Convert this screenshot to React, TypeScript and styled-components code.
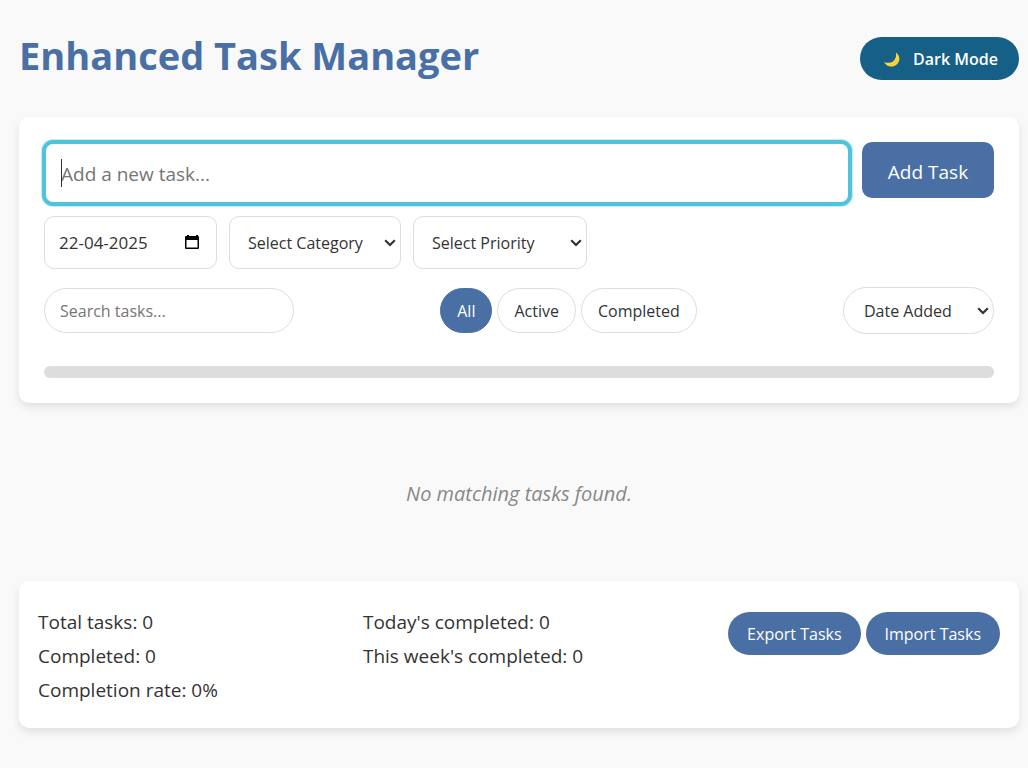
import React, { useState } from "react";
import styled, { createGlobalStyle, css } from "styled-components";

const GlobalStyle = createGlobalStyle`
  *, *::before, *::after { box-sizing: border-box; }
  body {
    margin: 0;
    background: #f9f9f9;
    color: #333333;
    font-family: "Open Sans", "Noto Sans", sans-serif;
    font-size: 16px;
  }
  button, input, select { font-family: inherit; margin: 0; }
`;

const Page = styled.main`
  max-width: 1028px;
  margin: 0 auto;
  padding: 20px 9px 32px 19px;
`;

const Header = styled.header`
  display: flex;
  align-items: center;
  justify-content: space-between;
  height: 77px;
  margin-bottom: 20px;
`;

const Title = styled.h1`
  margin: 0 0 8px;
  color: #4a6fa5;
  font-size: 38px;
  font-weight: 700;
  line-height: 56px;
`;

const PillButton = styled.button<{ $dark?: boolean }>`
  display: inline-flex;
  align-items: center;
  justify-content: center;
  gap: 12px;
  height: 43px;
  padding: 0 ${(p) => (p.$dark ? 21 : 19)}px;
  border: none;
  border-radius: 22px;
  background: ${(p) => (p.$dark ? "#166088" : "#4a6fa5")};
  color: #ffffff;
  font-size: 16px;
  font-weight: ${(p) => (p.$dark ? 600 : 400)};
  white-space: nowrap;
  cursor: pointer;
`;

const Card = styled.section`
  border-radius: 10px;
  background: #ffffff;
  box-shadow: 0 4px 8px rgba(0, 0, 0, 0.1);
`;

const Controls = styled(Card)`
  padding: 25px;
`;

const TaskForm = styled.form`
  display: flex;
  flex-wrap: wrap;
  align-items: flex-start;
  gap: 12px;
`;

const FormRow = styled.div`
  display: flex;
  align-items: flex-start;
  flex: 1 0 100%;
  gap: 12px;
`;

const TaskField = styled.div`
  position: relative;
  display: flex;
  flex: 1;
  min-width: 0;
`;

const TaskInput = styled.input`
  flex: 1;
  min-width: 0;
  height: 62px;
  padding: 2px 15px 0;
  border: 2px solid #4fc3dc;
  border-radius: 9px;
  outline: none;
  box-shadow: 0 0 0 2px #4fc3dc, 0 0 0 3px #c4eaf3;
  color: #333333;
  caret-color: transparent;
  font-size: 19px;
  &::placeholder { color: #757575; }
`;

const Caret = styled.span`
  position: absolute;
  top: 17px;
  left: 17px;
  width: 1px;
  height: 28px;
  background: #333333;
  pointer-events: none;
`;

const AddButton = styled.button`
  width: 132px;
  height: 56px;
  padding: 4px 0 0;
  border: none;
  border-radius: 10px;
  background: #4a6fa5;
  color: #ffffff;
  font-size: 19px;
  font-weight: 500;
  cursor: pointer;
`;

const fieldFrame = css`
  border: 1px solid #dddddd;
  background-color: #ffffff;
  color: #333333;
  font-size: 16px;
`;

const DateField = styled.div`
  ${fieldFrame}
  display: flex;
  align-items: center;
  width: 173px;
  height: 53px;
  padding: 0 14px;
  border-radius: 10px;
`;

const DateInput = styled.input`
  flex: 1;
  min-width: 0;
  padding: 0;
  border: none;
  outline: none;
  background: transparent;
  color: inherit;
  font-size: 17px;
`;

const IconButton = styled.button`
  display: flex;
  padding: 0;
  border: none;
  background: transparent;
  cursor: pointer;
`;

const SelectField = styled.div<{ $width: number }>`
  position: relative;
  display: flex;
  width: ${(p) => p.$width}px;
`;

const Select = styled.select<{ $pill?: boolean }>`
  ${fieldFrame}
  appearance: none;
  flex: 1;
  min-width: 0;
  height: ${(p) => (p.$pill ? 47 : 53)}px;
  padding: 0 20px 0 ${(p) => (p.$pill ? 20 : 18)}px;
  border-radius: ${(p) => (p.$pill ? 24 : 10)}px;
`;

const Chevron = styled.svg`
  position: absolute;
  top: calc(50% - 4px);
  right: 5px;
  width: 12px;
  height: 8px;
  pointer-events: none;
`;

const Toolbar = styled.div`
  display: flex;
  align-items: center;
  justify-content: space-between;
  gap: 12px;
  margin-top: 18px;
`;

const SearchInput = styled.input`
  ${fieldFrame}
  width: 250px;
  height: 45px;
  padding: 0 15px;
  border-radius: 23px;
  &::placeholder { color: #757575; }
`;

const Filters = styled.div`
  display: flex;
  gap: 5px;
`;

const FilterButton = styled.button<{ $active: boolean }>`
  ${fieldFrame}
  height: 45px;
  padding: 0 16px;
  border-radius: 23px;
  cursor: pointer;
  ${(p) =>
    p.$active &&
    css`
      border-color: #4a6fa5;
      background-color: #4a6fa5;
      color: #ffffff;
    `}
`;

const ProgressTrack = styled.div`
  height: 12px;
  margin-top: 32px;
  border-radius: 6px;
  background: #dddddd;
`;

const EmptyMessage = styled.p`
  margin: 76px 0 72px;
  color: #888888;
  font-size: 20px;
  font-style: italic;
  line-height: 30px;
  text-align: center;
`;

const Stats = styled(Card)`
  display: flex;
  align-items: flex-start;
  justify-content: space-between;
  padding: 24px 19px 21px;
`;

const StatList = styled.div`
  font-size: 19px;
  line-height: 34px;
`;

const Actions = styled.div`
  display: flex;
  gap: 5px;
  margin-top: 7px;
`;

const FILTERS = ["All", "Active", "Completed"];

interface DropdownProps {
  label: string;
  width: number;
  options: string[];
  pill?: boolean;
}

function Dropdown({ label, width, options, pill }: DropdownProps) {
  return (
    <SelectField $width={width}>
      <Select $pill={pill} aria-label={label}>
        {options.map((option) => (
          <option key={option}>{option}</option>
        ))}
      </Select>
      <Chevron viewBox="0 0 12 8" aria-hidden="true">
        <path d="M1.2 1.3L6 6L10.8 1.3" fill="none" stroke="#333333" strokeWidth="2.2" />
      </Chevron>
    </SelectField>
  );
}

export default function App() {
  const [task, setTask] = useState("");
  const [focused, setFocused] = useState(true);
  const [date, setDate] = useState("22-04-2025");
  const [query, setQuery] = useState("");
  const [filter, setFilter] = useState("All");

  return (
    <>
      <GlobalStyle />
      <Page>
        <Header>
          <Title>Enhanced Task Manager</Title>
          <PillButton type="button" $dark>
            <svg width="20" height="20" viewBox="0 0 20 20" aria-hidden="true">
              <path
                d="M15 3.5C19 6.5 19.4 11.5 16.5 14.8C13 18.8 6 18.8 3 13C7 14.6 11 14 13.2 11.2C15 9 15.4 6.5 15 3.5Z"
                fill="#fdd835"
              />
              <path d="M16.8 9.5C16.5 13.5 12 16.8 7.5 16.2C11.5 15.8 15.5 13.5 16.8 9.5Z" fill="#fbb430" />
            </svg>
            Dark Mode
          </PillButton>
        </Header>

        <Controls>
          <TaskForm onSubmit={(e) => e.preventDefault()}>
            <FormRow>
              <TaskField>
                <TaskInput
                  autoFocus
                  aria-label="New task"
                  placeholder="Add a new task..."
                  value={task}
                  onFocus={() => setFocused(true)}
                  onBlur={() => setFocused(false)}
                  onChange={(e) => setTask(e.target.value)}
                  style={{ caretColor: task ? "#333333" : undefined }}
                />
                {focused && !task && <Caret />}
              </TaskField>
              <AddButton type="submit">Add Task</AddButton>
            </FormRow>
            <DateField>
              <DateInput aria-label="Due date" value={date} onChange={(e) => setDate(e.target.value)} />
              <IconButton type="button" aria-label="Open calendar">
                <svg width="18" height="18" viewBox="0 0 18 18" aria-hidden="true">
                  <path
                    fill="#000000"
                    fillRule="evenodd"
                    d="M3 1h2v1h7V1h2v1q1 0 1 1v11q0 1-1 1H2q-1 0-1-1V3q0-1 1-1h1zM2.5 6v7.5h11V6z"
                  />
                </svg>
              </IconButton>
            </DateField>
            <Dropdown label="Category" width={172} options={["Select Category", "Work", "Personal"]} />
            <Dropdown label="Priority" width={174} options={["Select Priority", "High", "Low"]} />
          </TaskForm>

          <Toolbar>
            <SearchInput
              type="search"
              aria-label="Search tasks"
              placeholder="Search tasks..."
              value={query}
              onChange={(e) => setQuery(e.target.value)}
            />
            <Filters>
              {FILTERS.map((name) => (
                <FilterButton key={name} type="button" $active={name === filter} onClick={() => setFilter(name)}>
                  {name}
                </FilterButton>
              ))}
            </Filters>
            <Dropdown label="Sort by" width={151} pill options={["Date Added", "Due Date", "Priority"]} />
          </Toolbar>

          <ProgressTrack role="progressbar" aria-label="Completion" aria-valuenow={0} />
        </Controls>

        <EmptyMessage>No matching tasks found.</EmptyMessage>

        <Stats>
          <StatList>
            <div>Total tasks: 0</div>
            <div>Completed: 0</div>
            <div>Completion rate: 0%</div>
          </StatList>
          <StatList>
            <div>Today's completed: 0</div>
            <div>This week's completed: 0</div>
          </StatList>
          <Actions>
            <PillButton type="button">Export Tasks</PillButton>
            <PillButton type="button">Import Tasks</PillButton>
          </Actions>
        </Stats>
      </Page>
    </>
  );
}
